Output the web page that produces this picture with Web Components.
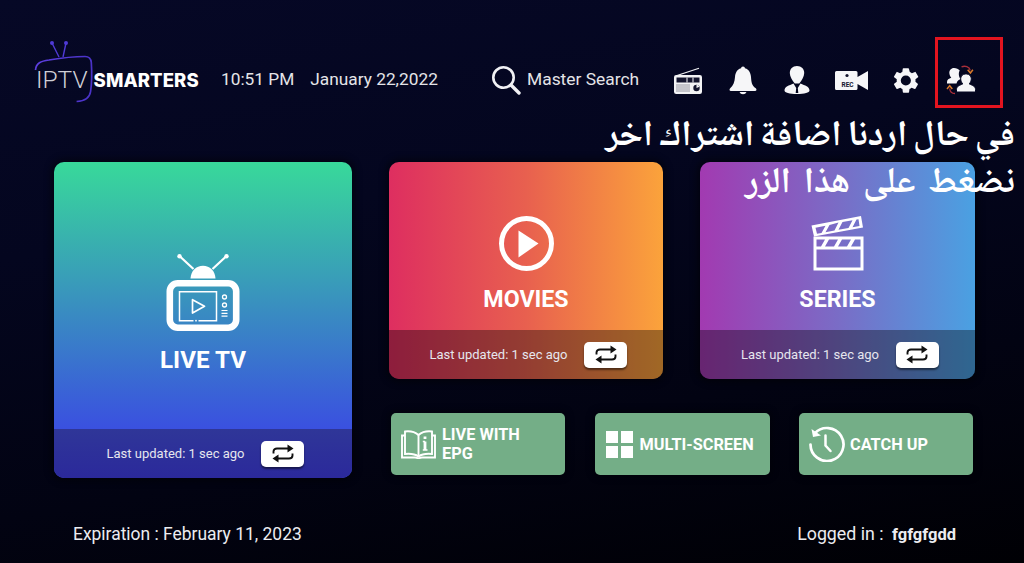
<!DOCTYPE html>
<html lang="en"><head><meta charset="utf-8"><title>IPTV Smarters</title>
<style>
html,body{margin:0;padding:0;background:#000}
body{width:1024px;height:563px;overflow:hidden;font-family:Roboto,"Liberation Sans",sans-serif}
</style></head><body>
<iptv-app>
  <app-header slot="header"></app-header>
  <home-grid slot="main"></home-grid>
  <status-bar slot="footer"></status-bar>
  <help-note slot="note"></help-note>
</iptv-app>
<script>
const ICONS={
 search:`<svg width="30" height="30" viewBox="0 0 30 30" fill="none" stroke="#f1f1f4" stroke-width="2.6" stroke-linecap="round"><circle cx="12.5" cy="12.5" r="10.2"/><path d="M20 20l8 8" stroke-width="3.4"/></svg>`,
 radio:`<svg width="30" height="27" viewBox="0 0 30 27"><path d="M4 8.5L26 1.2" stroke="#f3f3f5" stroke-width="1.2"/><rect x="1" y="8" width="28" height="19" rx="2.2" fill="#f3f3f5"/><rect x="3.5" y="10.5" width="23" height="5" fill="#14152e"/><path d="M14 10.5v5M20 10.5v5" stroke="#f3f3f5"/><path d="M3.5 18h14M3.5 20h14M3.5 22h14M3.5 24h14" stroke="#3c3d52" stroke-width="1" stroke-dasharray="1 1"/><circle cx="23.5" cy="21" r="3.2" fill="#14152e"/><path d="M23.5 21v-3.2a3.2 3.2 0 0 1 3 2z" fill="#f3f3f5"/></svg>`,
 bell:`<svg width="28" height="29" viewBox="0 0 28 29" fill="#f6f6f8"><circle cx="14" cy="2.4" r="2"/><path d="M14 2C8.5 2 6.4 6.5 6 11c-.4 5-1.6 8.500-4.800 11.300-1 .9-1 2.700.8 2.700h24c1.800 0 1.800-1.800.8-2.700C22.600 19.500 22.400 16 22 11 21.600 6.500 19.500 2 14 2z"/><path d="M10.500 26a3.700 3.400 0 0 0 7 0z"/></svg>`,
 user:`<svg width="26" height="28" viewBox="0 0 26 28" fill="#f6f6f8"><path d="M13 0c-4.500 0-7.200 3.200-7.200 7 0 3.800 2.600 7.700 5 10.500h4.400c2.400-2.800 5-6.700 5-10.500 0-3.800-2.700-7-7.200-7z"/><path d="M9.500 17.500C5 19.500.5 20.500.5 24.500c0 2.300 5 3.500 12.500 3.500s12.500-1.200 12.500-3.500c0-4-4.500-5-9-7L13.800 22l.5 5h-2.600l.5-5z"/></svg>`,
 rec:`<svg width="33" height="19" viewBox="0 0 33 19"><path d="M1.500 0H21a1.500 1.500 0 0 1 1.500 1.500V6L33 0v19L22.500 13v4.500A1.500 1.500 0 0 1 21 19H1.500A1.500 1.500 0 0 1 0 17.500v-16A1.500 1.500 0 0 1 1.500 0z" fill="#f6f6f8"/><circle cx="12" cy="4.500" r="1.600" fill="#14152e"/><text x="6.500" y="15.500" font-family="Roboto,sans-serif" font-weight="700" font-size="6.500" fill="#14152e">REC</text></svg>`,
 gear:`<svg width="29" height="29" viewBox="0 0 24 24" fill="#f6f6f8"><path fill-rule="evenodd" d="M19.400 13c.04-.33.06-.66.06-1s-.02-.67-.07-1l2.160-1.690c.2-.15.25-.42.13-.64l-2.050-3.550a.5.500 0 0 0-.62-.22l-2.550 1.030a7.500 7.500 0 0 0-1.730-1L14 2.210a.5.500 0 0 0-.5-.43H9.400a.5.500 0 0 0-.5.430l-.38 2.710c-.62.26-1.200.6-1.730 1L4.340 4.900a.5.500 0 0 0-.62.22L1.670 8.670a.5.500 0 0 0 .13.640L3.960 11c-.05.33-.08.66-.08 1s.03.67.08 1L1.800 14.690a.5.500 0 0 0-.13.640l2.050 3.550c.13.22.39.3.62.22l2.550-1.030c.53.4 1.110.74 1.730 1l.38 2.710c.04.24.25.43.5.43h4.100c.25 0 .46-.19.5-.43l.38-2.710c.62-.26 1.200-.6 1.730-1l2.550 1.030c.23.08.49 0 .62-.22l2.050-3.550a.5.500 0 0 0-.13-.64zM11.450 16.200a4.200 4.200 0 1 1 0-8.400 4.200 4.200 0 0 1 0 8.400z"/></svg>`,
 accounts:`<svg width="30" height="30" viewBox="0 0 30 30" fill="#f6f6f8"><path d="M8 3c-3 0-4.700 2.400-4.700 4.800 0 1.800.9 3.600 2 5C2.800 14 1 14.500 1 17v1.500h9.500c.6-2.600 2.300-3.600 4-4.400-1-1.600-1.700-3.400-1.700-5.200 0-1.300.3-2.400.9-3.300C12.400 4 10.500 3 8 3z"/><path d="M19.500 9c-3 0-4.800 2.200-4.800 4.800 0 1.800.9 3.700 2 5.200-3 1.300-6.200 2.200-6.200 5.500V27h19v-2.500c0-3.300-3.200-4.200-6.200-5.500 1.100-1.500 2-3.400 2-5.200 0-2.600-1.800-4.800-4.800-4.800z" stroke="#060824" stroke-width="1"/><path d="M15.500 1.800c3.500-1.300 7.800-.3 8.800 3.500" fill="none" stroke="#a92f3a" stroke-width="1.300"/><path d="M21.700 4.700l2.700 3.300 2.500-3.300" fill="none" stroke="#d9792a" stroke-width="1.500"/><path d="M9 28.500c-3 0-5-1.500-5.300-5" fill="none" stroke="#a92f3a" stroke-width="1.300"/><path d="M1 24l2.700-3.300 2.600 3.300" fill="none" stroke="#d9792a" stroke-width="1.500"/></svg>`,
 tv:`<svg width="74" height="78" viewBox="0 0 74 78"><path d="M14 2.500L27.500 15M60 2.500L46.500 15" stroke="#fff" stroke-width="2.200"/><circle cx="13.500" cy="2.200" r="2.200" fill="#fff"/><circle cx="60.500" cy="2.200" r="2.200" fill="#fff"/><path d="M24.500 24.500c.5-8 5.500-12.800 12.500-12.800S49 16.500 49.500 24.500z" fill="#fff"/><rect x="3.800" y="29.300" width="66.400" height="44.400" rx="8" fill="none" stroke="#fff" stroke-width="6.600"/><path d="M27.500 66.700H13.500V37.700H50.500V66.700H32.500" fill="none" stroke="#fff" stroke-width="1.500"/><circle cx="30" cy="66.700" r=".9" fill="#fff"/><path d="M26.500 45.700L38.500 52.300L26.500 59z" fill="none" stroke="#fff" stroke-width="1.700" stroke-linejoin="round"/><circle cx="58.500" cy="43" r="2" fill="none" stroke="#fff" stroke-width="1.300"/><circle cx="58.500" cy="51" r="2" fill="none" stroke="#fff" stroke-width="1.300"/><path d="M55.500 56.500h6M55.500 59.300h6M55.500 62.100h6" stroke="#fff" stroke-width="1.200"/></svg>`,
 play:`<svg width="55" height="55" viewBox="0 0 55 55"><circle cx="27.500" cy="27.500" r="25" fill="none" stroke="#fff" stroke-width="5"/><path d="M19.500 14.500L39.500 27.500L19.500 41.500z" fill="#fff"/></svg>`,
 clap:`<svg width="54" height="55" viewBox="0 0 54 55"><path fill="#fff" fill-rule="evenodd" d="M.5 9.500L50 0l2 11.500L3 20.500zM4.500 11.700L6 17.700L10.500 16.900L14.500 9.800zM18.500 9.100L14.500 16.200L23.500 14.500L27.500 6.600zM31.500 6L27.500 13.800L37.500 12L41.500 4.200zM45.500 3.500L41.500 11.200L48.500 10L47.500 3.200z"/><path fill="#fff" fill-rule="evenodd" d="M2.500 20.500H52.500V54.500H2.500zM5.500 23.500V30.500H10L14 23.500zM18 23.500L14 30.500H23L27 23.500zM31 23.500L27 30.500H36L40 23.500zM44 23.500L40 30.500H49.500V23.500zM5.500 33.500V51.500H49.500V33.500z"/></svg>`,
 book:`<svg width="35" height="29" viewBox="0 0 35 29" fill="none" stroke="#fff" stroke-width="1.900"><path d="M17.500 5C14 2 8 1 4 1.500V24c5-.5 10 0 13.500 2.500C21 24 26 23.500 31 24V1.500C27 1 21 2 17.500 5z"/><path d="M17.500 5V26.500"/><path d="M4 5.500H1V27.500H14c1.500 0 2.500 .5 3.500 1 1-.5 2-1 3.500-1H34V5.500H31"/><path d="M24 6.500v2.500M24 11.500v8.500" stroke-width="2.800"/><path d="M21.800 11.500H24M21.800 20H26.500" stroke-width="1.400"/></svg>`,
 grid:`<svg width="27" height="27" viewBox="0 0 27 27" fill="#fff"><rect width="12" height="12"/><rect x="15" width="12" height="12"/><rect y="15" width="12" height="12"/><rect x="15" y="15" width="12" height="12"/></svg>`,
 clock:`<svg width="36" height="36" viewBox="0 0 36 36" fill="none" stroke="#fff" stroke-linecap="round"><path d="M5.700 7.500A16.500 16.500 0 1 1 1.500 18.500" stroke-width="2.700"/><path d="M2.500 3L4 11L12 9.500z" fill="#fff" stroke="none"/><path d="M16.500 9.500V19.500L21.500 25" stroke-width="2.500"/></svg>`,
 swap:`<svg width="24" height="19" viewBox="0 0 24 19" fill="none" stroke="#111" stroke-width="1.900"><path d="M2.500 9.500V7.500C2.500 5.500 4 4.500 6 4.500H18"/><path d="M21.500 9.500V11.500C21.500 13.500 20 14.500 18 14.500H6"/><path d="M16.500 .6L22.500 4.500L16.500 8.400z" fill="#111" stroke="none"/><path d="M7.500 10.600L1.500 14.500L7.500 18.400z" fill="#111" stroke="none"/></svg>`
};
function def(name,css,html){
  customElements.define(name,class extends HTMLElement{
    connectedCallback(){
      if(this.shadowRoot)return;
      const r=this.attachShadow({mode:"open"});
      const a=n=>this.getAttribute(n)||"";
      r.innerHTML=`<style>${css}</style>`+(typeof html==="function"?html(a):html);
    }
  });
}
def("iptv-app",`
 :host{display:block;position:relative;width:1024px;height:563px;overflow:hidden;color:#fff;
  background:linear-gradient(170deg,#060826 0%,#04061f 35%,#020312 70%,#000004 100%)}
 .head{display:block;padding-top:43px;height:74px}
 .main{display:block;padding:45px 49px 0 54px}
 .foot{display:block;padding:46px 68px 0 73px}
`,`<div class="head"><slot name="header"></slot></div>
   <div class="main"><slot name="main"></slot></div>
   <div class="foot"><slot name="footer"></slot></div>
   <slot name="note"></slot>`);
def("iptv-logo",`
 :host{display:block;position:relative;height:74px}
 svg{position:absolute;left:0;top:0;overflow:visible}
 .t{position:absolute;left:0;top:0;height:74px;display:flex;align-items:center;white-space:nowrap}
 .a{font:300 24.500px/1 Roboto,sans-serif;color:#cfcfd6;margin-left:1px}
 .b{font:800 18.500px/1 Inter,sans-serif;color:#fff;margin-left:6px;letter-spacing:.1px}
`,`<svg width="70" height="70" viewBox="0 0 70 70" fill="none"><defs><linearGradient id="g" x1="0" y1="0" x2="1" y2="0"><stop offset="0" stop-color="#5d3fe0"/><stop offset="1" stop-color="#4a32c8"/></linearGradient></defs>
  <path d="M17 0L24 14M31 0L28 14" stroke="#4f3ad6" stroke-width="1.400"/><circle cx="17" cy="0" r="2" fill="#4f3ad6"/><circle cx="31" cy="0" r="2" fill="#4f3ad6"/>
  <path d="M.5 27C1 20 6 18 14 17c9-1.500 25-3.500 36-3.500 4 0 6 2.500 6.300 6 .6 9 .6 20-.7 29-.8 5.500-4 9.500-14 10" stroke="url(#g)" stroke-width="1.700"/></svg>
  <div class="t"><span class="a">IPTV</span><span class="b">SMARTERS</span></div>`);
def("date-time",`
 :host{display:flex;gap:16px;align-items:center;font:400 17.300px/1 Roboto,sans-serif;color:#e4e4e8;height:74px;white-space:nowrap}
`,`<span>10:51 PM</span><span>January 22,2022</span>`);
def("search-box",`
 :host{display:flex;gap:6px;align-items:center;height:74px;font:400 17.400px/1 Roboto,sans-serif;color:#e4e4e8;white-space:nowrap}
 svg{display:block}
`,`${ICONS.search}<span>Master Search</span>`);
def("top-icons",`
 :host{display:grid;grid-template-columns:repeat(6,54.500px);height:74px;align-items:center;justify-items:center}
 svg{display:block}
`,`${ICONS.radio}${ICONS.bell}${ICONS.user}${ICONS.rec}${ICONS.gear}${ICONS.accounts}`);
def("app-header",`
 :host{display:grid;grid-template-columns:186px 270px 170px 1fr;padding-left:35px}
`,`<iptv-logo></iptv-logo><date-time></date-time><search-box></search-box><top-icons></top-icons>`);
def("refresh-btn",`
 :host{display:flex;align-items:center;justify-content:center;width:43px;height:26px;background:#fff;border-radius:5px;box-shadow:0 2px 2px rgba(0,0,0,.5)}
 svg{display:block}
`,ICONS.swap);
def("home-card",`
 :host{display:flex;flex-direction:column;border-radius:10px;overflow:hidden;box-shadow:0 0 7px 3px rgba(0,0,0,.45);background:var(--bg)}
 .body{flex:1;display:flex;flex-direction:column;align-items:center;justify-content:center;padding-top:36px}
 svg{display:block}
 .title{font:700 var(--fs,23.200px)/28px Roboto,sans-serif;margin-top:14px;color:#fff}
 .foot{height:49px;display:flex;align-items:center;justify-content:center;gap:17px;padding-left:5px;background:var(--fb,rgba(0,0,0,.36));color:#e6e6ee;font:400 13px/1 Roboto,sans-serif;white-space:nowrap}
`,a=>`<div class="body">${ICONS[a("icon")]}<div class="title">${a("label")}</div></div>
 <div class="foot"><span>Last updated: 1 sec ago</span><refresh-btn></refresh-btn></div>`);
def("mini-tile",`
 :host{display:flex;align-items:center;height:62px;background:#74ae87;border-radius:5px;box-shadow:0 0 6px 3px rgba(0,0,0,.3);font:700 16.300px/19px Roboto,sans-serif;color:#fff;padding-left:var(--pl);gap:var(--gp)}
 svg{display:block;flex:none}
`,a=>`${ICONS[a("icon")]}<div>${a("label").replace("|","<br>")}</div>`);
def("home-grid",`
 :host{display:grid;grid-template-columns:298px 1fr;gap:37px;height:316px}
 .right{display:grid;grid-template-rows:217px 62px;gap:34px}
 .top{display:grid;grid-template-columns:274px 275px;gap:37px}
 .mini{display:grid;grid-template-columns:174px 175px 174px;gap:29px 29.500px;padding:0 2px}
 .movies{--bg:linear-gradient(90deg,#de2e60,#e8604f 50%,#fba33b)}
 .series{--bg:linear-gradient(90deg,#a23ab1,#7a6cc6 50%,#4aa1e2)}
 .live{--bg:linear-gradient(180deg,#38d99a 0%,#3a50e0 84.500%);--fb:linear-gradient(180deg,#2f3698,#2b299b);--fs:24.200px}
`,`<home-card class="live" icon="tv" label="LIVE TV"></home-card>
 <div class="right"><div class="top">
   <home-card class="movies" icon="play" label="MOVIES"></home-card>
   <home-card class="series" icon="clap" label="SERIES"></home-card></div>
  <div class="mini">
   <mini-tile icon="book" label="LIVE WITH|EPG" style="--pl:10px;--gp:6px"></mini-tile>
   <mini-tile icon="grid" label="MULTI-SCREEN" style="--pl:11px;--gp:7px"></mini-tile>
   <mini-tile icon="clock" label="CATCH UP" style="--pl:10px;--gp:5px"></mini-tile>
  </div></div>`);
def("status-bar",`
 :host{display:flex;justify-content:space-between;font:400 17.450px/20px Roboto,sans-serif;color:#ececf0;white-space:nowrap}
 .l{font-size:17.800px}
 b{font-weight:700;margin-left:4px;font-size:16.500px}
`,`<span>Expiration : February 11, 2023</span><span class="l">Logged in : <b>fgfgfgdd</b></span>`);
def("help-note",`
 :host{display:block}
 .box{position:absolute;left:935px;top:37px;width:62px;height:65px;border:3px solid #e3141f}
 .ar{position:absolute;right:9px;top:114px;width:500px;direction:rtl;text-align:right;font:700 36px/47px "Noto Naskh Arabic","Noto Sans Arabic","Droid Arabic Naskh",serif;color:#fff;margin:0}
 .ar span{display:block}
 .x{word-spacing:-2px}
 .y{word-spacing:5px}
`,`<div class="box"></div><p class="ar" lang="ar" dir="rtl"><span class="x">في حال اردنا اضافة اشتراك اخر</span><span class="y">نضغط على هذا الزر</span></p>`);
</script>
</body></html>
